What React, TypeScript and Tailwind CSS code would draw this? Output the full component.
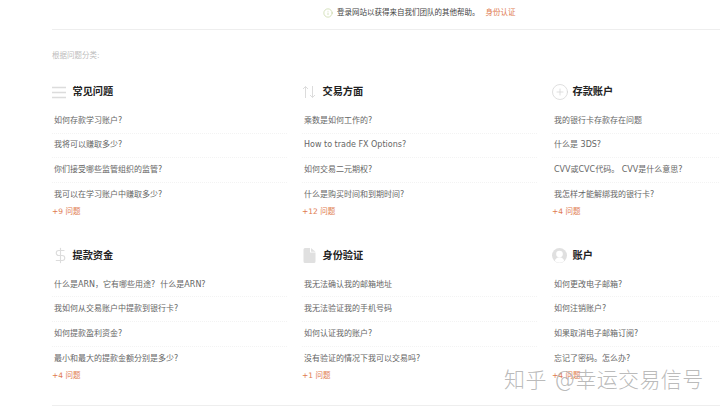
import { CirclePlus, DollarSign, Info } from 'lucide-react';
import type { ReactNode } from 'react';

const bodyFont = "font-['DejaVu_Sans','Noto_Sans_CJK_SC',sans-serif]";

function LinesIcon() {
    return (
        <svg width="14" height="13" viewBox="0 0 14 13" fill="none" stroke="#dcdcdc" strokeWidth="1.400">
            <path d="M0 1.500h14M0 6.500h14M0 11.500h14" />
        </svg>
    );
}

function ArrowsIcon() {
    return (
        <svg width="14" height="14" viewBox="0 0 14 14" fill="none" stroke="#dcdcdc" strokeWidth="1">
            <path d="M3.500 13V1.500M1 4l2.500-2.500L6 4" />
            <path d="M10.500 1v11.500M8 10l2.500 2.500L13 10" />
        </svg>
    );
}

function FileIcon() {
    return (
        <svg width="14" height="15" viewBox="0 0 14 15" fill="#e0e0e0">
            <path d="M1.500 1.500A1.500 1.500 0 0 1 3 0h5v4.500h5.500v9A1.500 1.500 0 0 1 12 15H3a1.500 1.500 0 0 1-1.500-1.500z" />
            <path d="M9 0l4.500 3.700H9z" />
        </svg>
    );
}

function UserIcon() {
    return (
        <svg width="15" height="15" viewBox="0 0 15 15">
            <circle cx="7.500" cy="7.500" r="7.500" fill="#e0e0e0" />
            <circle cx="7.500" cy="6" r="3.300" fill="#fff" />
            <path d="M2.800 13c.6-2.700 2.500-3.800 4.700-3.800s4.100 1.100 4.700 3.800a7 7 0 0 1-9.400 0z" fill="#fff" />
        </svg>
    );
}

type Category = {
    title: string;
    icon: ReactNode;
    questions: string[];
    more: string;
};

const categories: Category[] = [
    {
        title: '常见问题',
        icon: <LinesIcon />,
        questions: ['如何存款学习账户?', '我将可以赚取多少?', '你们接受哪些监管组织的监管?', '我可以在学习账户中赚取多少?'],
        more: '+9 问题',
    },
    {
        title: '交易方面',
        icon: <ArrowsIcon />,
        questions: ['乘数是如何工作的?', 'How to trade FX Options?', '如何交易二元期权?', '什么是购买时间和到期时间?'],
        more: '+12 问题',
    },
    {
        title: '存款账户',
        icon: <CirclePlus size={18} strokeWidth={1} color="#d4d4d4" className="-ml-[1px]" />,
        questions: ['我的银行卡存款存在问题', '什么是 3DS?', 'CVV或CVC代码。 CVV是什么意思?', '我怎样才能解绑我的银行卡?'],
        more: '+4 问题',
    },
    {
        title: '提款资金',
        icon: <DollarSign size={17} strokeWidth={1.6} color="#dcdcdc" />,
        questions: ['什么是ARN，它有哪些用途?  什么是ARN?', '我如何从交易账户中提款到银行卡?', '如何提款盈利资金?', '最小和最大的提款金额分别是多少?'],
        more: '+4 问题',
    },
    {
        title: '身份验证',
        icon: <FileIcon />,
        questions: ['我无法确认我的邮箱地址', '我无法验证我的手机号码', '如何认证我的账户?', '没有验证的情况下我可以交易吗?'],
        more: '+1 问题',
    },
    {
        title: '账户',
        icon: <UserIcon />,
        questions: ['如何更改电子邮箱?', '如何注销账户?', '如果取消电子邮箱订阅?', '忘记了密码。怎么办?'],
        more: '+4 问题',
    },
];

function CategoryCard({ category }: { category: Category }) {
    return (
        <div>
            <div className="flex h-[20px] items-center">
                <div className="flex w-[20.500px] shrink-0 items-center">{category.icon}</div>
                <h3 className="text-[10.200px] leading-none font-bold text-[#222]">{category.title}</h3>
            </div>
            <ul className="mt-[7px]">
                {category.questions.map((question, index) => (
                    <li
                        key={question}
                        className={`flex h-[24.600px] items-center pl-[2px] text-[8px] whitespace-pre text-[#666] ${
                            index < 3 ? 'border-b border-dotted border-[#f3f3f3]' : ''
                        }`}
                    >
                        {question}
                    </li>
                ))}
            </ul>
            <div className="mt-[-1.500px] text-[7.500px] leading-[12px] text-[#e07b50]">{category.more}</div>
        </div>
    );
}

export default function App() {
    return (
        <div className={`relative h-[409px] w-[720px] overflow-hidden bg-white ${bodyFont}`}>
            <div className="ml-[52px] w-[668px]">
                {/* Notice */}
                <div className="flex h-[30px] items-center gap-[4px] border-b border-[#eeeeee] pb-[3px] pl-[271px] text-[7.500px] text-[#444]">
                    <Info size={10} strokeWidth={1.2} color="#aec57e" />
                    <span>登录网站以获得来自我们团队的其他帮助。</span>
                    <span className="ml-[2px] text-[#e07b50]">身份认证</span>
                </div>

                <p className="mt-[20px] text-[7.500px] leading-[12px] text-[#bdbdbd]">根据问题分类:</p>

                <div className="mt-[20px] grid w-[735px] grid-cols-3 gap-x-[15px] gap-y-[28px]">
                    {categories.map((category) => (
                        <CategoryCard key={category.title} category={category} />
                    ))}
                </div>

                <div className="mt-[23px] border-t border-[#eeeeee]" />
            </div>

            {/* Watermark */}
            <div className="absolute top-[365px] left-[504px] text-[21px] leading-[30px] font-light tracking-[0.4px] whitespace-nowrap text-[#a8a8a8]/80">
                知乎 @幸运交易信号
            </div>
        </div>
    );
}
